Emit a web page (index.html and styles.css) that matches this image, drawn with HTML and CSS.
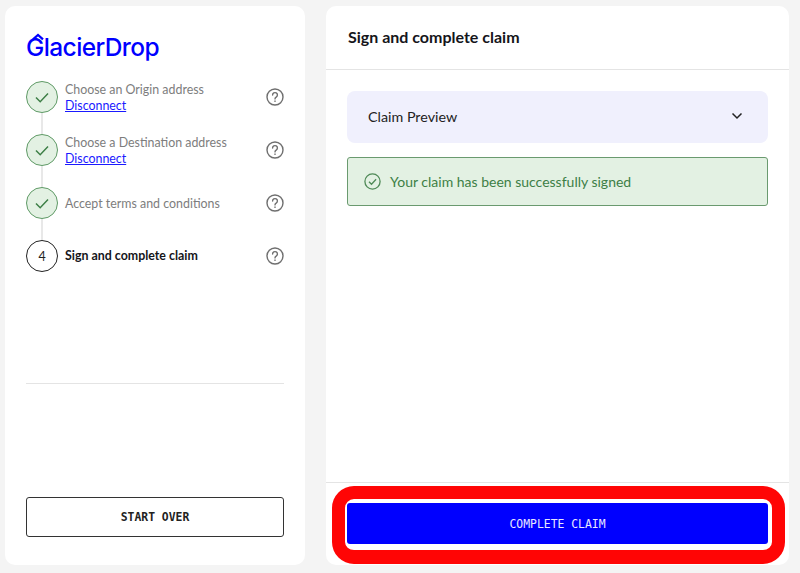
FILE: index.html
```html
<!DOCTYPE html>
<html lang="en">
<head>
    <meta charset="UTF-8">
    <meta name="viewport" content="width=device-width, initial-scale=1.0">
    <title>GlacierDrop</title>
    <link rel="stylesheet" href="styles.css">
</head>
<body>
    <aside class="sidebar">
        <div class="logo">
            GlacierDrop
            <svg class="logo-roof" width="14" height="9" viewBox="0 0 14 9"><path d="M2 6.4L7 2l5 4.4"/></svg>
        </div>

        <ol class="steps">
            <li class="step done">
                <span class="step-mark">
                    <svg width="18" height="18" viewBox="0 0 18 18"><path d="M3 9.5l4.2 4.2L15 5.5"/></svg>
                </span>
                <div class="step-text">
                    <p>Choose an Origin address</p>
                    <a href="#">Disconnect</a>
                </div>
                <svg class="help" width="18" height="18" viewBox="0 0 18 18"><circle cx="9" cy="9" r="8"/><path d="M6.6 7a2.4 2.4 0 1 1 3.6 2.1c-.8.5-1.2.9-1.2 1.8"/><path d="M9 13v.4"/></svg>
            </li>
            <li class="step done">
                <span class="step-mark">
                    <svg width="18" height="18" viewBox="0 0 18 18"><path d="M3 9.5l4.2 4.2L15 5.5"/></svg>
                </span>
                <div class="step-text">
                    <p>Choose a Destination address</p>
                    <a href="#">Disconnect</a>
                </div>
                <svg class="help" width="18" height="18" viewBox="0 0 18 18"><circle cx="9" cy="9" r="8"/><path d="M6.6 7a2.4 2.4 0 1 1 3.6 2.1c-.8.5-1.2.9-1.2 1.8"/><path d="M9 13v.4"/></svg>
            </li>
            <li class="step done">
                <span class="step-mark">
                    <svg width="18" height="18" viewBox="0 0 18 18"><path d="M3 9.5l4.2 4.2L15 5.5"/></svg>
                </span>
                <div class="step-text">
                    <p>Accept terms and conditions</p>
                </div>
                <svg class="help" width="18" height="18" viewBox="0 0 18 18"><circle cx="9" cy="9" r="8"/><path d="M6.6 7a2.4 2.4 0 1 1 3.6 2.1c-.8.5-1.2.9-1.2 1.8"/><path d="M9 13v.4"/></svg>
            </li>
            <li class="step current">
                <span class="step-mark">4</span>
                <div class="step-text">
                    <p>Sign and complete claim</p>
                </div>
                <svg class="help" width="18" height="18" viewBox="0 0 18 18"><circle cx="9" cy="9" r="8"/><path d="M6.6 7a2.4 2.4 0 1 1 3.6 2.1c-.8.5-1.2.9-1.2 1.8"/><path d="M9 13v.4"/></svg>
            </li>
        </ol>

        <hr class="divider">
        <button class="btn btn-outline">START OVER</button>
    </aside>

    <main class="panel">
        <h1 class="panel-title">Sign and complete claim</h1>

        <div class="panel-body">
            <div class="preview">
                <span>Claim Preview</span>
                <svg width="12" height="8" viewBox="0 0 12 8"><path d="M1.5 1.5L6 6l4.5-4.5"/></svg>
            </div>
            <div class="notice">
                <svg width="17" height="17" viewBox="0 0 17 17"><circle cx="8.5" cy="8.5" r="7.6"/><path d="M5 8.8l2.5 2.5 4.6-5"/></svg>
                <span>Your claim has been successfully signed</span>
            </div>
        </div>

        <div class="panel-footer">
            <button class="btn btn-primary">COMPLETE CLAIM</button>
            <div class="highlight"></div>
        </div>
    </main>
</body>
</html>
```

FILE: styles.css
```css
* {
    box-sizing: border-box;
}
body {
    font-family: Lato, Arial, sans-serif;
    background-color: #f4f4f4;
    margin: 0;
    height: 573px;
    padding: 6px 11px 8px 5px;
    display: flex;
    gap: 21px;
    overflow: hidden;
}
.sidebar {
    width: 300px;
    background-color: #fff;
    border-radius: 10px;
    padding: 23px 21px 28px;
    display: flex;
    flex-direction: column;
}
.logo {
    position: relative;
    font-family: Inter, Arial, sans-serif;
    font-size: 24.5px;
    font-weight: 500;
    letter-spacing: -0.6px;
    line-height: 36px;
    color: #0000ff;
}
.logo-roof {
    position: absolute;
    left: 5px;
    top: 4px;
    fill: none;
    stroke: #0000ff;
    stroke-width: 2.2;
}
.steps {
    list-style: none;
    margin: 16px 0 0;
    padding: 0;
}
.step {
    position: relative;
    display: flex;
    align-items: center;
    gap: 7px;
    height: 32px;
    margin-bottom: 21px;
}
.step:last-child {
    margin-bottom: 0;
}
.step:not(:last-child)::after {
    content: "";
    position: absolute;
    left: 15px;
    top: 32px;
    width: 2px;
    height: 21px;
    background-color: #e8e8e8;
}
.step-mark {
    width: 32px;
    height: 32px;
    border-radius: 50%;
    display: flex;
    align-items: center;
    justify-content: center;
    flex-shrink: 0;
    font-size: 12.5px;
    color: #222;
    border: 1px solid #222;
}
.done .step-mark {
    background-color: #e3f1e3;
    border-color: #5f9a66;
}
.step-mark svg {
    fill: none;
    stroke: #3d7f46;
    stroke-width: 1.5;
}
.step-text {
    flex: 1;
    font-size: 12.4px;
    line-height: 16px;
    color: #7d7d7d;
}
.done .step-text {
    padding-top: 2px;
}
.step-text p {
    margin: 0;
}
.step-text a {
    color: #1a1aff;
}
.current .step-text {
    color: #15151a;
    font-weight: 700;
}
.help {
    fill: none;
    stroke: #6f6f6f;
    stroke-width: 1.4;
    stroke-linecap: round;
}
.divider {
    width: 100%;
    margin: 111px 0 auto;
    border: none;
    border-top: 1px solid #e4e4e4;
}
.btn {
    width: 100%;
    height: 40px;
    border-radius: 3px;
    font-family: "DejaVu Sans Mono", monospace;
    font-size: 11.4px;
    cursor: pointer;
}
.btn-outline {
    background-color: #fff;
    color: #222;
    font-weight: 700;
    border: 1px solid #333;
}
.btn-primary {
    background-color: #0000ff;
    color: #e8e8ff;
    border: none;
    height: 41px;
}
.panel {
    flex: 1;
    background-color: #fff;
    border-radius: 10px;
    display: flex;
    flex-direction: column;
}
.panel-title {
    margin: 0;
    height: 64px;
    padding: 0 22px 2px;
    display: flex;
    align-items: center;
    font-size: 16px;
    font-weight: 700;
    color: #15151a;
    border-bottom: 1px solid #e4e4e4;
}
.panel-body {
    flex: 1;
    padding: 21px 21px;
}
.preview {
    height: 52px;
    padding: 0 25px 2px 21px;
    display: flex;
    align-items: center;
    justify-content: space-between;
    background-color: #f0f0fd;
    border-radius: 8px;
    font-size: 14.3px;
    color: #222;
}
.preview svg {
    fill: none;
    stroke: #222;
    stroke-width: 1.5;
}
.notice {
    margin-top: 14px;
    height: 49px;
    padding: 0 16px;
    display: flex;
    align-items: center;
    gap: 9px;
    background-color: #e3f1e3;
    border: 1px solid #6a9a6f;
    border-radius: 3px;
    font-size: 14px;
    color: #3d7f46;
}
.notice svg {
    fill: none;
    stroke: #4f8a57;
    stroke-width: 1.3;
}
.panel-footer {
    position: relative;
    height: 83px;
    padding: 20px 21px;
    border-top: 1px solid #e4e4e4;
}
.highlight {
    position: absolute;
    left: 6px;
    right: 4px;
    top: 3px;
    bottom: 1px;
    border-style: solid;
    border-color: #ff0505;
    border-width: 13px 13px 14px;
    border-radius: 22px;
    pointer-events: none;
}
```
